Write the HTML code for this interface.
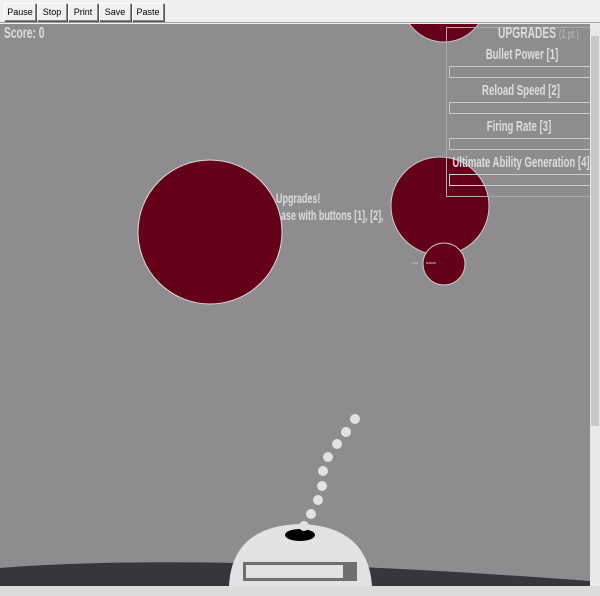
<!DOCTYPE html>
<html><head><style>
body{margin:0;width:600px;height:596px;overflow:hidden;background:#f0f0f0;font-family:"Liberation Sans",sans-serif;position:relative}
.tb{position:absolute;top:0;left:0;width:600px;height:22px;background:#f0f0f0;border-bottom:1px solid #a0a0a0}
.btn{position:absolute;top:3px;height:16px;border:1px solid #888;border-top-color:#fff;border-left-color:#fff;box-shadow:1px 1px 0 #555;background:#f0f0f0;font:9px "Liberation Sans",sans-serif;text-align:center;line-height:16px;color:#000}
.t{position:absolute;color:#ddd;font-weight:bold;white-space:nowrap;transform:scaleX(0.64);transform-origin:0 0}
.c{position:absolute;color:#ddd;font-weight:bold;white-space:nowrap;transform:translateX(-50%) scaleX(0.64);font-size:15px}
</style></head><body>
<div class="tb">
<div class="btn" style="left:4px;width:30px">Pause</div>
<div class="btn" style="left:37px;width:28px">Stop</div>
<div class="btn" style="left:68px;width:28px">Print</div>
<div class="btn" style="left:99px;width:30px">Save</div>
<div class="btn" style="left:132px;width:30px">Paste</div>
</div>
<svg style="position:absolute;left:0;top:24px" width="590" height="562">
<rect width="590" height="562" fill="#8e8c8f"/>
<circle cx="444" cy="-24" r="42" fill="#650019" stroke="#ccc" stroke-width="1"/>
<circle cx="210" cy="208" r="72" fill="#650019" stroke="#ddd" stroke-width="1"/>
<circle cx="440" cy="182" r="49" fill="#650019" stroke="#ccc" stroke-width="1"/>
<circle cx="444" cy="240" r="21" fill="#650019" stroke="#ccc" stroke-width="1"/>
<line x1="412" y1="239" x2="418" y2="239" stroke="#bbb"/><line x1="426" y1="239" x2="436" y2="239" stroke="#bbb"/>
<rect x="446.5" y="3.5" width="150" height="169" fill="none" stroke="#aaa"/>
<rect x="449.5" y="42.5" width="145" height="11" fill="none" stroke="#ccc"/>
<rect x="449.5" y="78.5" width="145" height="11" fill="none" stroke="#ccc"/>
<rect x="449.5" y="114.5" width="145" height="11" fill="none" stroke="#ccc"/>
<rect x="449.5" y="150.5" width="145" height="11" fill="none" stroke="#ccc"/>
<path d="M0 562 L0 544 Q200 528 590 557 L590 562 Z" fill="#38363a"/>
<path d="M229 562 Q232 502 300 500 Q368 502 372 562 Z" fill="#e3e1e4"/>
<rect x="243" y="538" width="114" height="19" fill="#706e71"/>
<rect x="246" y="541" width="97" height="13" fill="#e3e1e4"/>
<ellipse cx="300" cy="511" rx="15" ry="6" fill="#000"/>
<g fill="#e3e1e4"><circle cx="304" cy="502" r="5"/><circle cx="311" cy="490" r="5"/><circle cx="318" cy="476" r="5"/><circle cx="322" cy="462" r="5"/><circle cx="323" cy="447" r="5"/><circle cx="328" cy="433" r="5"/><circle cx="337" cy="420" r="5"/><circle cx="346" cy="408" r="5"/><circle cx="355" cy="395" r="5"/></g>
</svg>
<div class="t" style="left:4px;top:25px;font-size:16px">Score: 0</div>
<div class="t" style="left:498px;top:25px;font-size:16px">UPGRADES <span style="font-size:12px;font-weight:normal;color:#bbb">(1 pt.)</span></div>
<div class="c" style="left:522px;top:46px">Bullet Power [1]</div>
<div class="c" style="left:521px;top:82px">Reload Speed [2]</div>
<div class="c" style="left:519px;top:118px">Firing Rate [3]</div>
<div class="c" style="left:521px;top:154px">Ultimate Ability Generation [4]</div>
<div class="t" style="left:276px;top:190px;font-size:14px">Upgrades!</div>
<div class="t" style="left:281px;top:207px;font-size:14px">ase with buttons [1], [2],</div>
<div style="position:absolute;left:590px;top:24px;width:10px;height:562px;background:#e8e8e8"><div style="margin:12px 1px;height:390px;background:#c8c8c8"></div></div>
<div style="position:absolute;left:0;top:586px;width:600px;height:10px;background:#dcdcdc"></div>
</body></html>
